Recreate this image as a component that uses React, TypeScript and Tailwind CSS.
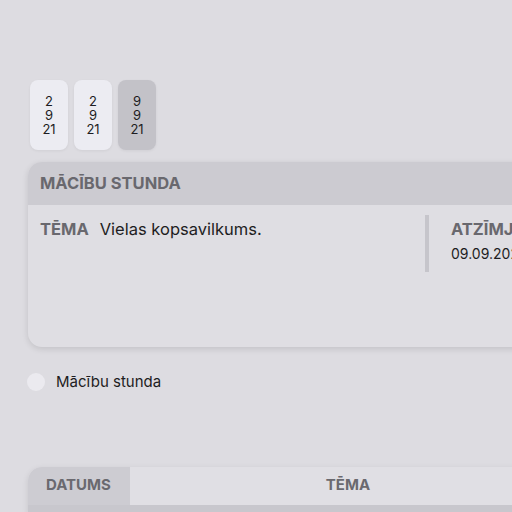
import React from "react";

export default function App() {
  const tiles = [
    { a: "2", b: "9", c: "21", active: false },
    { a: "2", b: "9", c: "21", active: false },
    { a: "9", b: "9", c: "21", active: true },
  ];
  return (
    <div
      className="w-[512px] h-[512px] overflow-hidden bg-[#dddce1] text-[#1d1d22]"
      style={{ fontFamily: "Inter, 'Liberation Sans', sans-serif" }}
    >
      <div className="pl-[28px] pt-[80px] w-[800px]">
        <div className="flex gap-[6px] pl-[2px]">
          {tiles.map((t, i) => (
            <div
              key={i}
              className={`w-[38px] h-[70px] rounded-[8px] flex flex-col items-center justify-center text-[13px] leading-[14px] shadow-[0_1px_3px_rgba(0,0,0,0.06)] ${
                t.active ? "bg-[#c3c2c8]" : "bg-[#ececf2]"
              }`}
            >
              <span>{t.a}</span>
              <span>{t.b}</span>
              <span>{t.c}</span>
            </div>
          ))}
        </div>

        <div className="mt-[12px] w-[720px] h-[185px] rounded-[14px] bg-[#dfdee3] shadow-[0_2px_6px_rgba(0,0,0,0.12)] overflow-hidden">
          <div className="h-[43px] bg-[#cccbd1] flex items-center pl-[12px] text-[16.5px] font-bold text-[#69686e]">
            MĀCĪBU STUNDA
          </div>
          <div className="flex pt-[10px]">
            <div className="w-[397px] flex items-start pl-[12px] pt-[2px] text-[16.5px] leading-[24px]">
              <span className="font-bold text-[#69686e]">TĒMA</span>
              <span className="ml-[11px]">Vielas kopsavilkums.</span>
            </div>
            <div className="w-[4px] h-[57px] bg-[#c6c5cb]" />
            <div className="pl-[22px] pt-[2px]">
              <div className="font-bold text-[16.5px] leading-[24px] text-[#69686e]">ATZĪMJU DATUMS</div>
              <div className="mt-[2px] text-[14px]">09.09.2021</div>
            </div>
          </div>
        </div>

        <div className="mt-[24px] flex items-center">
          <div className="w-[18px] h-[18px] rounded-full bg-[#ebeaef] -ml-[1px]" />
          <span className="ml-[11px] text-[15px]">Mācību stunda</span>
        </div>

        <div className="mt-[73px] w-[720px] rounded-t-[14px] overflow-hidden shadow-[0_2px_6px_rgba(0,0,0,0.1)]">
          <div className="flex h-[38px] bg-[#e0dfe4] text-[15px] font-bold text-[#6a696f]">
            <div className="w-[102px] bg-[#cdccd2] flex items-center pl-[18px]">DATUMS</div>
            <div className="w-[436px] flex items-center justify-center">TĒMA</div>
          </div>
          <div className="h-[8px] bg-[#c8c7cd]" />
        </div>
      </div>
    </div>
  );
}
